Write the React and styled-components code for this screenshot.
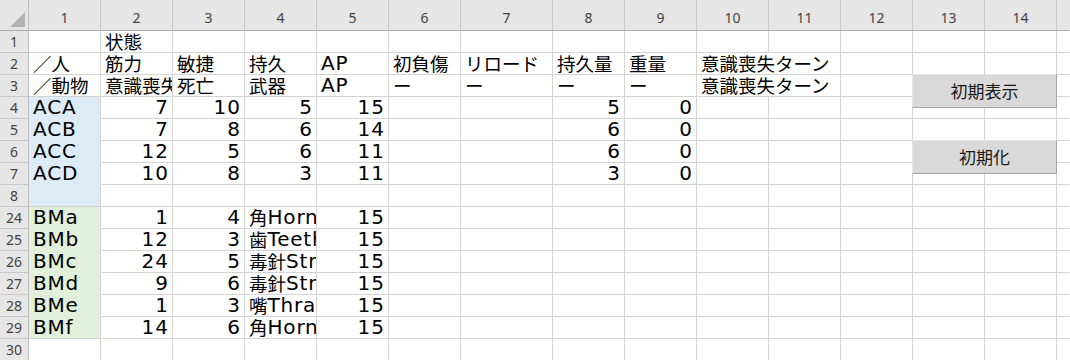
import React from "react";
import styled, { createGlobalStyle } from "styled-components";

const GlobalStyle = createGlobalStyle`
  html, body {
    margin: 0;
    padding: 0;
    background: #ffffff;
  }
  body {
    font-family: "DejaVu Sans", "Noto Sans CJK JP", sans-serif;
    overflow: hidden;
  }
`;

const BLUE = "#ddebf7";
const GREEN = "#e2efda";

const rows = [
  { n: 1, cells: [null, "状態"] },
  {
    n: 2,
    cells: ["／人", "筋力", "敏捷", "持久", "AP", "初負傷", "リロード", "持久量", "重量", { t: "意識喪失ターン", span: 2 }],
  },
  {
    n: 3,
    cells: ["／動物", "意識喪失", "死亡", "武器", "AP", "ー", "ー", "ー", "ー", { t: "意識喪失ターン", span: 2 }],
  },
  { n: 4, fill: BLUE, cells: ["ACA", 7, 10, 5, 15, null, null, 5, 0] },
  { n: 5, fill: BLUE, cells: ["ACB", 7, 8, 6, 14, null, null, 6, 0] },
  { n: 6, fill: BLUE, cells: ["ACC", 12, 5, 6, 11, null, null, 6, 0] },
  { n: 7, fill: BLUE, cells: ["ACD", 10, 8, 3, 11, null, null, 3, 0] },
  { n: 8, fill: BLUE, last: true, cells: [null] },
  { n: 24, fill: GREEN, cells: ["BMa", 1, 4, "角Horn", 15] },
  { n: 25, fill: GREEN, cells: ["BMb", 12, 3, "歯Teeth", 15] },
  { n: 26, fill: GREEN, cells: ["BMc", 24, 5, "毒針Strike", 15] },
  { n: 27, fill: GREEN, cells: ["BMd", 9, 6, "毒針Strike", 15] },
  { n: 28, fill: GREEN, cells: ["BMe", 1, 3, "嘴Thrash", 15] },
  { n: 29, fill: GREEN, last: true, cells: ["BMf", 14, 6, "角Horn", 15] },
  { n: 30, cells: [] },
];

const COLUMN_COUNT = 14;

// kana / kanji runs get their own size so latin can stay wide
const CJK = /([\u3000-\u30ff\u3400-\u9fff\uff00-\uffef]+)/;

const renderText = (t) => {
  if (typeof t !== "string") return t ?? "";
  return t
    .split(CJK)
    .filter(Boolean)
    .map((part, i) => (CJK.test(part) ? <Wide key={i}>{part}</Wide> : part));
};

const App = () => {
  return (
    <>
      <GlobalStyle />
      <Wrapper>
        <Sheet>
          <Corner>
            <svg width="29" height="31" viewBox="0 0 29 31">
              <polygon points="25,12 25,27 10,27" fill="#b4b4b4" />
            </svg>
          </Corner>
          {Array.from({ length: COLUMN_COUNT }, (_, i) => (
            <ColHead key={i}>{i + 1}</ColHead>
          ))}
          <ColHead $rest />

          {rows.map((row) => {
            const out = [<RowHead key={`h${row.n}`}>{row.n}</RowHead>];
            let c = 0;
            while (c < COLUMN_COUNT) {
              const raw = row.cells[c];
              const item = raw && typeof raw === "object" ? raw : { t: raw };
              const span = item.span || 1;
              out.push(
                <Cell
                  key={`${row.n}-${c}`}
                  $span={span}
                  $num={typeof item.t === "number"}
                  $fill={c === 0 ? row.fill : undefined}
                  $last={row.last}
                >
                  {renderText(item.t)}
                </Cell>
              );
              c += span;
            }
            out.push(<Cell key={`${row.n}-r`} $rest />);
            return out;
          })}
        </Sheet>

        <SheetButton $top={74}>初期表示</SheetButton>
        <SheetButton $top={140}>初期化</SheetButton>
      </Wrapper>
    </>
  );
};

export default App;

const Wrapper = styled.div`
  position: relative;
  width: 1070px;
  height: 360px;
  overflow: hidden;
`;

const Sheet = styled.div`
  display: grid;
  grid-template-columns: 29px repeat(6, 72px) 92px repeat(7, 72px) 1fr;
  grid-template-rows: 31px;
  grid-auto-rows: 22px;
`;

const Corner = styled.div`
  box-sizing: border-box;
  background: #e6e6e6;
  border-right: 1px solid #bcbcbc;
  border-bottom: 1px solid #ababab;
  overflow: hidden;

  svg {
    display: block;
  }
`;

const ColHead = styled.div`
  box-sizing: border-box;
  background: #e6e6e6;
  border-right: 1px solid ${({ $rest }) => ($rest ? "#e6e6e6" : "#c8c8c8")};
  border-bottom: 1px solid #ababab;
  display: flex;
  align-items: flex-end;
  justify-content: center;
  padding-bottom: 4px;

  font-family: "Noto Sans", "Noto Sans CJK JP", sans-serif;
  font-size: 14px;
  line-height: 16px;
  color: #444444;
`;

const RowHead = styled.div`
  box-sizing: border-box;
  background: #e6e6e6;
  border-right: 1px solid #bcbcbc;
  border-bottom: 1px solid #c8c8c8;
  display: flex;
  align-items: center;
  justify-content: center;

  font-family: "Noto Sans", "Noto Sans CJK JP", sans-serif;
  font-size: 14px;
  line-height: 16px;
  color: #444444;
`;

const Cell = styled.div`
  box-sizing: border-box;
  grid-column: span ${({ $span }) => $span || 1};
  background: ${({ $fill }) => $fill || "#ffffff"};
  border-right: 1px solid ${({ $rest }) => ($rest ? "#ffffff" : "#d4d4d4")};
  border-bottom: 1px solid
    ${({ $fill, $last }) => ($fill && !$last ? $fill : "#d4d4d4")};
  display: flex;
  align-items: flex-end;
  justify-content: ${({ $num }) => ($num ? "flex-end" : "flex-start")};
  padding: ${({ $num }) => ($num ? "0 3px 0 4px" : "0 4px")};

  font-size: 20px;
  line-height: 21px;
  letter-spacing: ${({ $num }) => ($num ? "1px" : "0.8px")};
  color: #000000;
  white-space: nowrap;
  overflow-x: clip;
  overflow-y: visible;
`;

const Wide = styled.span`
  font-size: 18.5px;
  line-height: 1;
  letter-spacing: 0;
`;

const SheetButton = styled.button`
  position: absolute;
  left: 912px;
  top: ${({ $top }) => $top}px;
  width: 145px;
  height: 34px;
  box-sizing: border-box;
  margin: 0;
  padding: 0;

  background: #d9d9d9;
  border: 1px solid;
  border-color: #e4e4e4 #a6a6a6 #a6a6a6 #e4e4e4;
  border-radius: 0;

  font-family: "Noto Sans CJK JP", sans-serif;
  font-size: 17px;
  line-height: 20px;
  color: #1a1a1a;
  cursor: pointer;
`;
